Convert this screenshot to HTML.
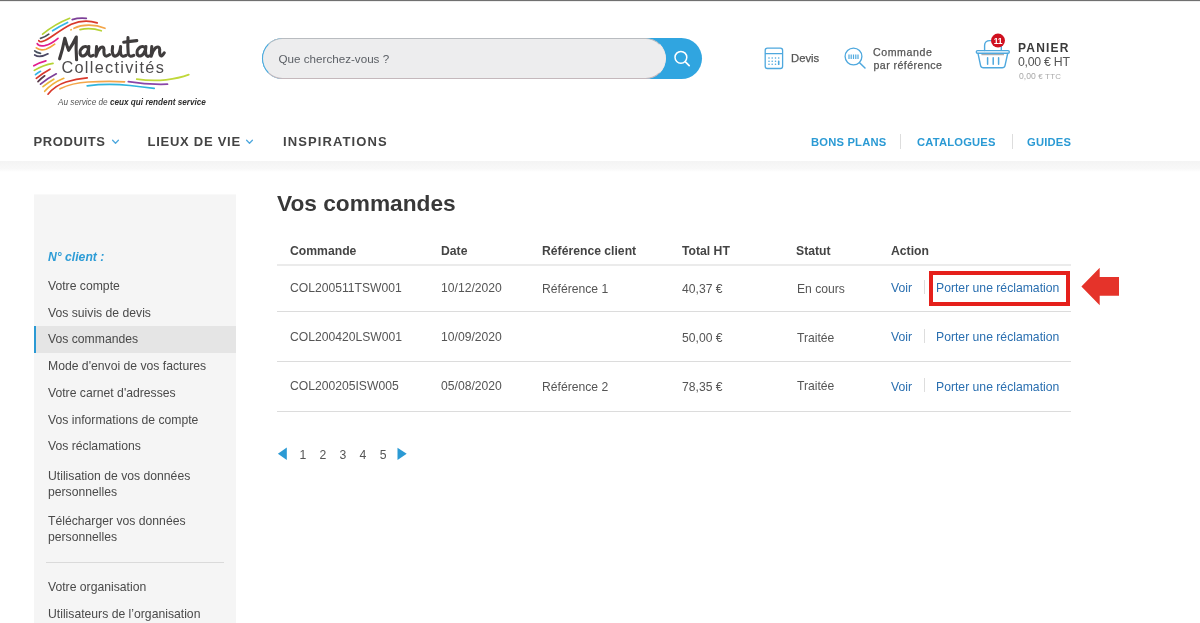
<!DOCTYPE html>
<html lang="fr">
<head>
<meta charset="utf-8">
<title>Vos commandes</title>
<style>
*{box-sizing:border-box;margin:0;padding:0}
html,body{width:1200px;height:623px;overflow:hidden;background:#fff}
body{font-family:"Liberation Sans",sans-serif;color:#444;position:relative;font-size:12px}
.abs{position:absolute;white-space:nowrap;line-height:1}
#wrap{position:absolute;left:0;top:0;width:1200px;height:623px;overflow:hidden;will-change:transform;transform:translateZ(0)}
#topline{left:0;top:0;width:1200px;height:2px;background:linear-gradient(#707070 0,#707070 50%,#eee 50%,#eee 100%)}
#hdrshadow{left:0;top:161px;width:1200px;height:11px;background:linear-gradient(#f4f4f4,#f8f8f8 70%,#fff)}
/* search */
#search{left:262px;top:38px;width:440px;height:41px;border-radius:21px;background:#30a5e0}
#searchin{left:262px;top:38px;width:404px;height:41px;border-radius:21px;background:#ededee;border:1px solid #b9bcc0;border-left-color:#4aa9dc;border-right-color:#f4ebe8;border-bottom-color:#c4b8bc}
#searchtxt{left:278.5px;top:53px;font-size:11.65px;color:#5c6066}
/* nav */
.nav{font-weight:bold;font-size:13px;color:#444;top:135.4px}
.rnav{font-weight:bold;font-size:11.2px;color:#2b9ad4;top:137px;letter-spacing:.2px}
.htxt{color:#555;-webkit-text-stroke:.25px #555}
.vsep{width:1px;background:#ddd}
/* sidebar */
#side{left:34px;top:194px;width:202px;height:429px;background:#f5f5f5;border-top:1px solid #f9f9f9}
.mi{left:48px;font-size:12.2px;color:#4a4a4a}
#active{left:34px;top:326px;width:202px;height:27px;background:#e5e5e5;border-left:2px solid #2b9ad4}
/* table */
.th{font-weight:bold;font-size:12.2px;color:#444;top:245px}
.td{font-size:12.15px;color:#555}
.lnk{font-size:12.2px;color:#2a6fb0}
.hr{left:277px;width:794px;height:1px;background:#dcdcdc}
.pg{font-size:12.2px;color:#555;top:449px}
</style>
</head>
<body>
<div id="wrap">
<div class="abs" id="topline"></div>
<div class="abs" id="hdrshadow"></div>

<!-- LOGO -->
<svg class="abs" id="logo" style="left:0;top:0" width="240" height="120" viewBox="0 0 240 120" fill="none" stroke-linecap="round" stroke-linejoin="round">
<g stroke-width="1.7">
<path d="M42.6 34.2Q55 24 69.7 18.3" stroke="#b5d334"/>
<path d="M72.2 19.6Q79 17.6 86.3 18.4" stroke="#7d3f98"/>
<path d="M52.6 30.8Q60 26 67.6 22.5" stroke="#35b6e8"/>
<path d="M38.8 40.6Q39.5 42.5 43 41.3C50 39 57 31.5 71.3 24.2C80 20.5 90 20.5 97.2 22.9" stroke="#d9392b"/>
<path d="M74 28.3C82 24.5 94 23.8 105 28.3" stroke="#f3a64a"/>
<path d="M71 29.8L71.2 29.7" stroke="#f6b042"/>
<path d="M80 29.6Q90.5 27 101.3 30.8" stroke="#b5d334"/>
<path d="M40.5 38.3Q45 37.3 48.8 34.2" stroke="#4b5358"/>
<path d="M37.2 43.6Q38 46.5 44.7 45.6Q51 44.3 58 38.3" stroke="#e21e8e"/>
<path d="M36.3 47.9Q40 51 46 49.2Q50.5 47.6 54.7 44.2" stroke="#f4a53c"/>
<path d="M34.7 50.8Q36.5 52.6 40.5 53.3" stroke="#4a5260"/>
<path d="M34.7 55Q40 58.3 48 53.8" stroke="#4b4763"/>
<path d="M33.8 65.8Q39 62.5 45.9 60.8" stroke="#e21e8e"/>
<path d="M34.3 70.4Q43 65 53 63.3" stroke="#b5d334"/>
<path d="M35.5 74.6Q38 72.5 40.5 71.3" stroke="#35b6e8"/>
<path d="M36.3 78.3Q43 73 50 69.2" stroke="#d9392b"/>
<path d="M38 81.7Q41 78.5 44.7 75.8" stroke="#5a3a4a"/>
<path d="M40.5 84.2Q48 78 56.3 73.8" stroke="#7d3f98"/>
<path d="M43 86.7Q48 82.5 53.8 79.2" stroke="#e9b93c"/>
<path d="M44.7 91.3Q52 83 63.8 78.3" stroke="#f0b03c"/>
<path d="M48 94.2Q55 85.5 66 82Q76 79 87.2 77.9" stroke="#d9392b"/>
<path d="M60 88.8Q72 82.8 88 82Q108 81 124.6 81.8" stroke="#f3a64a"/>
<path d="M87.2 85.8Q108 83 130 85.5Q143 87.3 154.2 88.3" stroke="#2fb4dd"/>
<path d="M128.3 81.7Q147 84.8 167.5 84.2" stroke="#8a46a8"/>
<path d="M136.7 79.2Q152 81.3 166 79.8Q179 78.2 188.8 74.6" stroke="#c0d83a"/>
</g>
<g stroke="#3f3c3d" stroke-width="3.1">
<path d="M59.6 58.8Q62.5 50 64.8 38.2Q66.5 45 68.6 50.3Q73 44 76.3 37Q75.8 49 76.6 59.8"/>
<path d="M88.5 48.3Q86.4 45.5 83.2 47.1Q79.6 49.7 80.1 53.5Q80.9 56.7 84 55.8Q86.8 54.5 88.2 50.2L88.9 46.6Q88 52 88.9 54.6Q90.3 57.3 93.3 55.3"/>
<path d="M96.6 46.6Q96.3 51.5 96 56.3Q97 51 100.3 47.8Q103.8 45.6 104 49.5Q103.6 52.5 104.3 54.6Q105.8 57.6 109.6 54.6"/>
<path d="M112.6 46.6Q111.8 51 112.8 54.2Q114.5 57.6 117.6 55Q120 52.5 120.6 46.6Q120 51.5 120.8 54.4Q122.3 57.5 126 55.3"/>
<path d="M128 37.6Q127.6 46 128.2 53.6Q129.3 57.8 133.8 55.3"/>
<path d="M123.7 42.3Q130 41.2 136.8 40.6"/>
<path d="M145.5 48.3Q143.4 45.5 140.2 47.1Q136.6 49.7 137.1 53.5Q137.9 56.7 141 55.8Q143.8 54.5 145.2 50.2L145.9 46.6Q145 52 145.9 54.6Q147.3 57.3 149.6 55.8"/>
<path d="M151.8 46.6Q151.5 51.5 151.2 56.3Q152.2 51 155.5 47.8Q159.5 45.6 159.7 49.5Q159.3 52.5 160 54.6Q161.5 57.8 164.3 52.8"/>
</g>
<text x="61.4" y="73" font-family="Liberation Sans, sans-serif" font-size="16.3" letter-spacing="1.3" fill="#4d4b4c" stroke="none">Collectivités</text>
<text x="58" y="105" font-family="Liberation Sans, sans-serif" font-size="8.2" font-style="italic" fill="#555" stroke="none">Au service de <tspan font-weight="bold" fill="#2e2e2e">ceux qui rendent service</tspan></text>
</svg>

<!-- SEARCH -->
<div class="abs" id="search"></div>
<div class="abs" id="searchin"></div>
<div class="abs" id="searchtxt">Que cherchez-vous ?</div>
<svg class="abs" style="left:670px;top:46px" width="24" height="24" viewBox="670 46 24 24"><circle cx="680.9" cy="57.3" r="5.9" fill="none" stroke="#fff" stroke-width="1.5"/><path d="M685.4 61.9L689.2 65.7" stroke="#fff" stroke-width="1.7" stroke-linecap="round"/></svg>


<!-- HEADER ICONS -->
<svg class="abs" style="left:760px;top:40px" width="120" height="36" viewBox="760 40 120 36" fill="none" stroke="#4ea8de" stroke-width="1.3" stroke-linecap="round">
<rect x="765.2" y="48.2" width="17.4" height="20.3" rx="2.2"/>
<path d="M765.5 53.6H782.3"/>
<g stroke="none" fill="#4ea8de"><circle cx="769" cy="58" r=".8"/><circle cx="772.2" cy="58" r=".8"/><circle cx="775.5" cy="58" r=".8"/><circle cx="778.7" cy="58" r=".8"/><circle cx="769" cy="61.2" r=".8"/><circle cx="772.2" cy="61.2" r=".8"/><circle cx="775.5" cy="61.2" r=".8"/><circle cx="769" cy="64.3" r=".8"/><circle cx="772.2" cy="64.3" r=".8"/><circle cx="775.5" cy="64.3" r=".8"/><rect x="777.9" y="60.4" width="1.6" height="4.7" rx=".7"/></g>
<circle cx="853.5" cy="56.5" r="8.4"/>
<path d="M859.6 62.8L865 68" stroke-width="1.5"/>
<path d="M849 54.5V59M851.2 54.5V59M853.5 54.5V59M855.8 54.5V59M858 54.5V59" stroke-width="1.2" stroke-linecap="butt"/>
</svg>
<div class="abs htxt" style="left:791px;top:53px;font-size:11.3px">Devis</div>
<div class="abs htxt" style="left:873px;top:46.5px;font-size:10.6px;letter-spacing:.58px">Commande</div>
<div class="abs htxt" style="left:873.5px;top:59.5px;font-size:10.6px;letter-spacing:.45px">par référence</div>

<svg class="abs" style="left:970px;top:30px" width="50" height="45" viewBox="970 30 50 45" fill="none" stroke="#4ea8de" stroke-width="1.4" stroke-linecap="round" stroke-linejoin="round">
<path d="M984.6 50.5V45.5Q984.6 40.6 990 40.6H992"/>
<path d="M1001.3 46V50.3"/>
<rect x="976.3" y="50.6" width="33" height="2.6" rx="1.3"/>
<path d="M978 53.4L980.6 65.6Q981.1 67.8 983.4 67.8H1002.2Q1004.5 67.8 1005 65.6L1007.7 53.4"/>
<path d="M981.8 54.7H1003.6" stroke="#9a9a9a" stroke-width="1"/>
<path d="M987.6 57.8V64.3M993.2 57.8V64.3M998.6 57.8V64.3" stroke-width="1.5"/>
<circle cx="998" cy="40.6" r="7" fill="#d0101f" stroke="none"/>
</svg>
<div class="abs" style="left:992px;top:36.5px;width:12px;text-align:center;font-size:8.5px;font-weight:bold;color:#fff;letter-spacing:-.2px">11</div>
<div class="abs" style="left:1018px;top:42px;font-size:12px;font-weight:bold;color:#3a3a3a;letter-spacing:1.2px">PANIER</div>
<div class="abs" style="left:1018px;top:55.5px;font-size:12.3px;color:#555;letter-spacing:-.25px">0,00 € HT</div>
<div class="abs" style="left:1019px;top:72px;font-size:8.6px;color:#a9a9a9">0,00 <span style="font-size:7.9px;letter-spacing:.25px">€ TTC</span></div>

<!-- NAV -->
<div class="abs nav" style="left:33.5px;letter-spacing:.6px">PRODUITS</div>
<div class="abs nav" style="left:147.5px;letter-spacing:.73px">LIEUX DE VIE</div>
<div class="abs nav" style="left:283px;letter-spacing:1.1px">INSPIRATIONS</div>
<svg class="abs" style="left:111px;top:139px" width="9" height="6" viewBox="0 0 9 6" fill="none" stroke="#4ea8de" stroke-width="1.3" stroke-linecap="round" stroke-linejoin="round"><path d="M1.6 1.3L4.5 4.2L7.4 1.3"/></svg>
<svg class="abs" style="left:245px;top:139px" width="9" height="6" viewBox="0 0 9 6" fill="none" stroke="#4ea8de" stroke-width="1.3" stroke-linecap="round" stroke-linejoin="round"><path d="M1.6 1.3L4.5 4.2L7.4 1.3"/></svg>
<div class="abs rnav" style="left:811px">BONS PLANS</div>
<div class="abs rnav" style="left:917px">CATALOGUES</div>
<div class="abs rnav" style="left:1027px">GUIDES</div>
<div class="abs vsep" style="left:900px;top:134px;height:15px"></div>
<div class="abs vsep" style="left:1012px;top:134px;height:15px"></div>

<!-- SIDEBAR -->
<div class="abs" id="side"></div>
<div class="abs" id="active"></div>
<div class="abs mi" style="top:250.5px;color:#2d9cd6;font-weight:bold;font-style:italic;font-size:12.2px">N° client :</div>
<div class="abs mi" style="top:280px">Votre compte</div>
<div class="abs mi" style="top:306.5px">Vos suivis de devis</div>
<div class="abs mi" style="top:333px">Vos commandes</div>
<div class="abs mi" style="top:360px">Mode d'envoi de vos factures</div>
<div class="abs mi" style="top:387px">Votre carnet d'adresses</div>
<div class="abs mi" style="top:413.5px">Vos informations de compte</div>
<div class="abs mi" style="top:440px">Vos réclamations</div>
<div class="abs mi" style="top:470px">Utilisation de vos données</div>
<div class="abs mi" style="top:485.5px">personnelles</div>
<div class="abs mi" style="top:515px">Télécharger vos données</div>
<div class="abs mi" style="top:530.5px">personnelles</div>
<div class="abs" style="left:46px;top:562px;width:178px;height:1px;background:#dadada"></div>
<div class="abs mi" style="top:580.5px">Votre organisation</div>
<div class="abs mi" style="top:607.5px">Utilisateurs de l’organisation</div>

<!-- MAIN -->
<div class="abs" style="left:277px;top:192px;font-size:22.7px;font-weight:bold;color:#383838">Vos commandes</div>
<div class="abs th" style="left:290px">Commande</div>
<div class="abs th" style="left:441px">Date</div>
<div class="abs th" style="left:542px">Référence client</div>
<div class="abs th" style="left:682px">Total HT</div>
<div class="abs th" style="left:796px">Statut</div>
<div class="abs th" style="left:891px">Action</div>
<div class="abs hr" style="top:264px;height:2px;background:#ebebeb"></div>
<div class="abs hr" style="top:311px"></div>
<div class="abs hr" style="top:361px"></div>
<div class="abs hr" style="top:411px"></div>

<div class="abs td" style="left:290px;top:282px">COL200511TSW001</div>
<div class="abs td" style="left:441px;top:282px">10/12/2020</div>
<div class="abs td" style="left:542px;top:283px">Référence 1</div>
<div class="abs td" style="left:682px;top:283px">40,37 €</div>
<div class="abs td" style="left:797px;top:283px">En cours</div>
<div class="abs lnk" style="left:891px;top:282px">Voir</div>
<div class="abs lnk" style="left:936px;top:282px">Porter une réclamation</div>
<div class="abs vsep" style="left:924px;top:280px;height:14px"></div>

<div class="abs td" style="left:290px;top:331px">COL200420LSW001</div>
<div class="abs td" style="left:441px;top:331px">10/09/2020</div>
<div class="abs td" style="left:682px;top:332px">50,00 €</div>
<div class="abs td" style="left:797px;top:332px">Traitée</div>
<div class="abs lnk" style="left:891px;top:331px">Voir</div>
<div class="abs lnk" style="left:936px;top:331px">Porter une réclamation</div>
<div class="abs vsep" style="left:924px;top:329px;height:14px"></div>

<div class="abs td" style="left:290px;top:380px">COL200205ISW005</div>
<div class="abs td" style="left:441px;top:380px">05/08/2020</div>
<div class="abs td" style="left:542px;top:381px">Référence 2</div>
<div class="abs td" style="left:682px;top:381px">78,35 €</div>
<div class="abs td" style="left:797px;top:380px">Traitée</div>
<div class="abs lnk" style="left:891px;top:381px">Voir</div>
<div class="abs lnk" style="left:936px;top:381px">Porter une réclamation</div>
<div class="abs vsep" style="left:924px;top:378px;height:14px"></div>

<!-- red box + arrow -->
<div class="abs" style="left:929px;top:270.5px;width:141px;height:35px;border:4px solid #e5201b"></div>
<svg class="abs" style="left:1080px;top:265px" width="42" height="44" viewBox="1080 265 42 44"><path d="M1081.4 286.4L1099.7 267.8V277.1H1119V295.8H1099.7V305.2Z" fill="#e5332a"/></svg>

<!-- pagination -->
<svg class="abs" style="left:277px;top:446px" width="11" height="16" viewBox="0 0 11 16"><path d="M9.8 1.6V14.1L0.9 7.8Z" fill="#2b9ad4"/></svg>
<div class="abs pg" style="left:299.4px">1</div>
<div class="abs pg" style="left:319.4px">2</div>
<div class="abs pg" style="left:339.5px">3</div>
<div class="abs pg" style="left:359.5px">4</div>
<div class="abs pg" style="left:379.7px">5</div>
<svg class="abs" style="left:397px;top:446px" width="11" height="16" viewBox="0 0 11 16"><path d="M0.5 1.8V14.1L9.7 7.8Z" fill="#2b9ad4"/></svg>
</div>
</body>
</html>
